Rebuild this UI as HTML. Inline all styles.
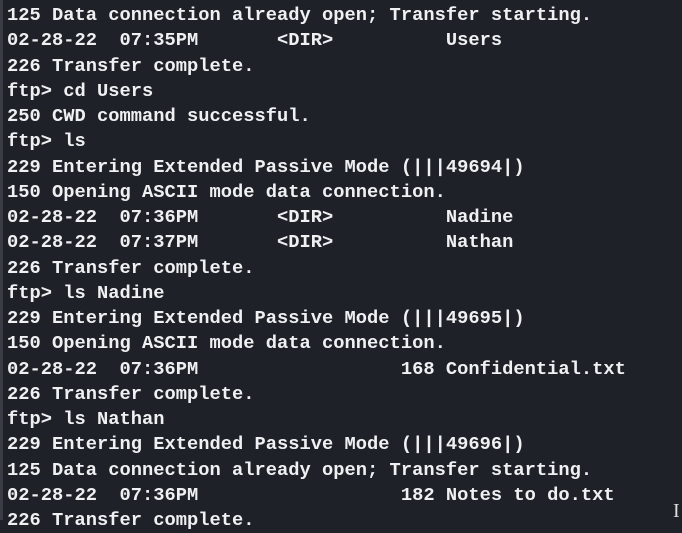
<!DOCTYPE html>
<html><head><style>
html,body{margin:0;padding:0;background:#1e2128;width:682px;height:520px;overflow:hidden}
.b{position:absolute;left:0;top:0;width:3px;height:520px;background:#3a3d44}
pre{position:absolute;left:7px;top:3px;margin:0;font-family:"Liberation Mono",monospace;font-size:18.75px;line-height:25.25px;color:#eef0f2;font-weight:bold;letter-spacing:0}
.cur{position:absolute;left:673px;top:500px;color:#ddd;font-family:"Liberation Serif",serif;font-size:20px}
</style></head><body><div class="b"></div>
<pre>125 Data connection already open; Transfer starting.
02-28-22  07:35PM       &lt;DIR&gt;          Users
226 Transfer complete.
ftp&gt; cd Users
250 CWD command successful.
ftp&gt; ls
229 Entering Extended Passive Mode (|||49694|)
150 Opening ASCII mode data connection.
02-28-22  07:36PM       &lt;DIR&gt;          Nadine
02-28-22  07:37PM       &lt;DIR&gt;          Nathan
226 Transfer complete.
ftp&gt; ls Nadine
229 Entering Extended Passive Mode (|||49695|)
150 Opening ASCII mode data connection.
02-28-22  07:36PM                  168 Confidential.txt
226 Transfer complete.
ftp&gt; ls Nathan
229 Entering Extended Passive Mode (|||49696|)
125 Data connection already open; Transfer starting.
02-28-22  07:36PM                  182 Notes to do.txt
226 Transfer complete.</pre>
<div class="cur">I</div>
</body></html>
